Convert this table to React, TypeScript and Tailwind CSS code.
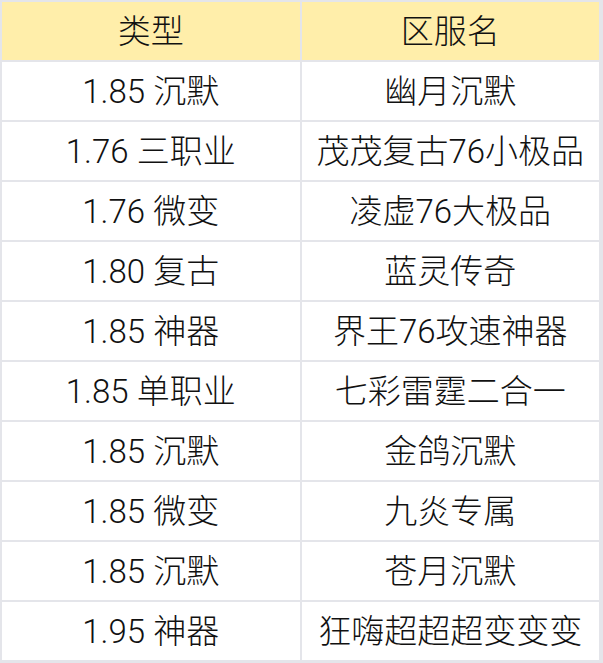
const rows: [string, string][] = [
  ["1.85 沉默", "幽月沉默"],
  ["1.76 三职业", "茂茂复古76小极品"],
  ["1.76 微变", "凌虚76大极品"],
  ["1.80 复古", "蓝灵传奇"],
  ["1.85 神器", "界王76攻速神器"],
  ["1.85 单职业", "七彩雷霆二合一"],
  ["1.85 沉默", "金鸽沉默"],
  ["1.85 微变", "九炎专属"],
  ["1.85 沉默", "苍月沉默"],
  ["1.95 神器", "狂嗨超超超变变变"],
];

export default function App() {
  return (
    <div
      className="w-[603px] h-[663px] bg-[#e4e5ea] pt-[2px] pl-[2px] pr-[4px] pb-[3px] text-[#111] text-[33px] font-light"
      style={{ fontFamily: 'Roboto, "Noto Sans CJK SC", sans-serif' }}
    >
      <div className="grid grid-cols-2 gap-[2px]">
        <div className="h-[58px] pt-[2px] bg-[#ffeeaa] flex items-center justify-center">类型</div>
        <div className="h-[58px] pt-[2px] bg-[#ffeeaa] flex items-center justify-center">区服名</div>
        {rows.map(([type, name], i) => (
          <>
            <div key={"a" + i} className="h-[58px] pt-[2px] bg-white flex items-center justify-center">
              {type}
            </div>
            <div key={"b" + i} className="h-[58px] pt-[2px] bg-white flex items-center justify-center">
              {name}
            </div>
          </>
        ))}
      </div>
    </div>
  );
}
